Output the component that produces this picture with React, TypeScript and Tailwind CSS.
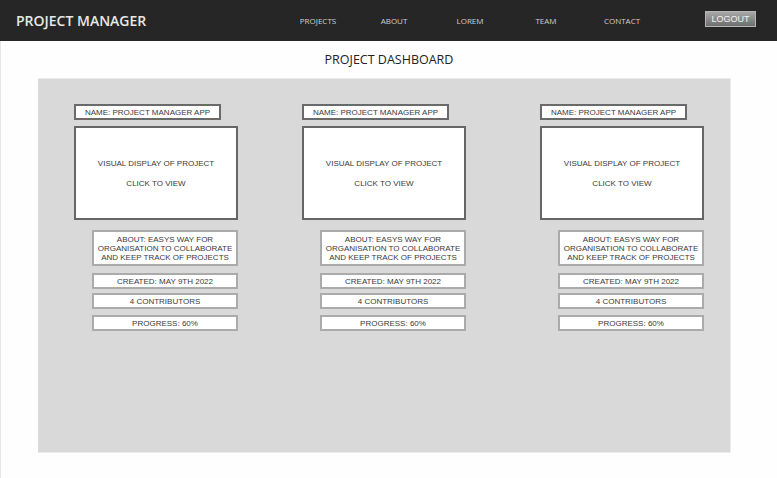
import React from "react";

const navItems = ["PROJECTS", "ABOUT", "LOREM", "TEAM", "CONTACT"];

function Card({ offset }: { offset: string }) {
  const box = "bg-white flex items-center justify-center text-center text-[8px] leading-[9px] text-[#3a3a3a]";
  return (
    <div className={`flex flex-col w-[164px] ${offset}`}>
      <div className={`${box} w-[147px] h-[16px] border-2 border-[#6a6a6a]`}>NAME: PROJECT MANAGER APP</div>
      <div className={`${box} mt-[6px] h-[94px] border-2 border-[#666] flex-col gap-[11px]`}>
        <span>VISUAL DISPLAY OF PROJECT</span>
        <span>CLICK TO VIEW</span>
      </div>
      <div className={`${box} ml-[18px] mt-[10px] h-[36px] border-2 border-[#ababab]`}>
        ABOUT: EASYS WAY FOR
        <br />
        ORGANISATION TO COLLABORATE
        <br />
        AND KEEP TRACK OF PROJECTS
      </div>
      <div className={`${box} ml-[18px] mt-[7px] h-[16px] border-2 border-[#ababab]`}>CREATED: MAY 9TH 2022</div>
      <div className={`${box} ml-[18px] mt-[4px] h-[16px] border-2 border-[#ababab]`}>4 CONTRIBUTORS</div>
      <div className={`${box} ml-[18px] mt-[6px] h-[16px] border-2 border-[#ababab]`}>PROGRESS: 60%</div>
    </div>
  );
}

export default function App() {
  return (
    <div className="w-[777px] h-[478px] bg-[#fefefe] overflow-hidden flex flex-col" style={{ fontFamily: '"Liberation Sans", Arial, sans-serif' }}>
      <header className="h-[41px] shrink-0 bg-[#262626] flex items-center">
        <div className="w-[280px] pl-[16px] text-[14px] font-semibold text-[#e8e8e8]" style={{ fontFamily: '"Open Sans", sans-serif' }}>
          PROJECT MANAGER
        </div>
        <nav className="flex" style={{ fontFamily: '"Open Sans", sans-serif' }}>
          {navItems.map((n) => (
            <div key={n} className="w-[76px] text-center text-[8px] text-[#d0d0d0]">
              {n}
            </div>
          ))}
        </nav>
        <button className="ml-[45px] w-[51px] h-[16px] -mt-[3px] border border-[#b5b5b5] bg-gradient-to-b from-[#a8a8a8] to-[#6e6e6e] text-[9px] leading-[14px] text-[#f2f2f2]">
          LOGOUT
        </button>
      </header>
      <main className="flex-1 border-l border-[#e6e6e6] flex flex-col">
        <h1 className="h-[37px] flex items-center justify-center text-[12.5px] text-[#222] pt-[1px]" style={{ fontFamily: '"Open Sans", sans-serif' }}>
          PROJECT DASHBOARD
        </h1>
        <section className="ml-[37px] w-[693px] h-[375px] bg-[#d9d9d9] border-t border-r border-b border-[#ececec] pt-[25px] pl-[36px] flex">
          <Card offset="" />
          <Card offset="ml-[64px]" />
          <Card offset="ml-[74px]" />
        </section>
      </main>
    </div>
  );
}
